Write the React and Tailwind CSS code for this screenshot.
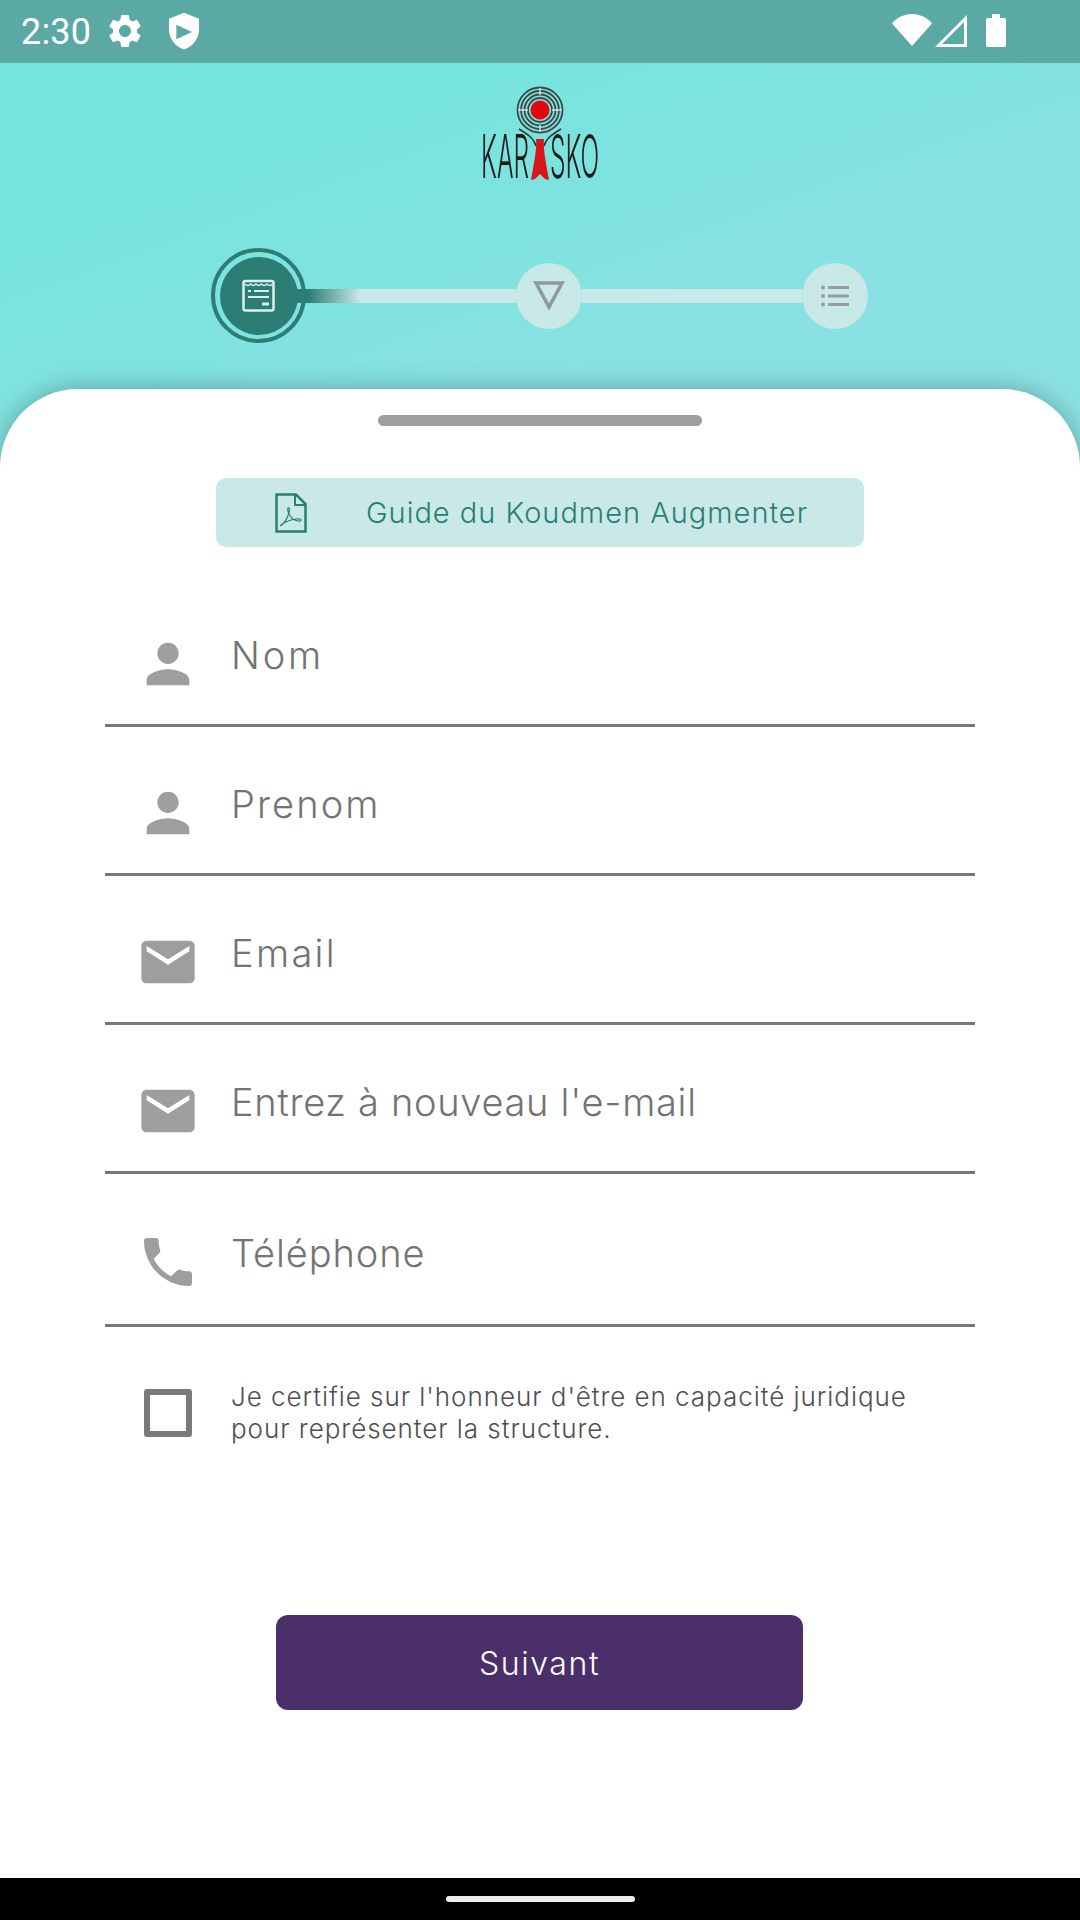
const PERSON = "M12 12c2.21 0 4-1.79 4-4s-1.79-4-4-4-4 1.79-4 4 1.79 4 4 4zm0 2c-2.67 0-8 1.34-8 4v2h16v-2c0-2.66-5.33-4-8-4z";
const EMAIL = "M20 4H4c-1.1 0-1.99.9-1.99 2L2 18c0 1.1.9 2 2 2h16c1.1 0 2-.9 2-2V6c0-1.1-.9-2-2-2zm0 4l-8 5-8-5V6l8 5 8-5v2z";
const PHONE = "M6.62 10.79c1.44 2.83 3.76 5.14 6.59 6.59l2.2-2.2c.27-.27.67-.36 1.02-.24 1.12.37 2.33.57 3.57.57.55 0 1 .45 1 1V20c0 .55-.45 1-1 1-9.39 0-17-7.61-17-17 0-.55.45-1 1-1h3.5c.55 0 1 .45 1 1 0 1.25.2 2.45.57 3.57.11.35.03.74-.25 1.02l-2.2 2.2z";
const GEAR = "M19.14 12.94c.04-.3.06-.61.06-.94 0-.32-.02-.64-.07-.94l2.03-1.58c.18-.14.23-.41.12-.61l-1.92-3.32c-.12-.22-.37-.29-.59-.22l-2.39.96c-.5-.38-1.03-.7-1.62-.94l-.36-2.54c-.04-.24-.24-.41-.48-.41h-3.84c-.24 0-.43.17-.47.41l-.36 2.54c-.59.24-1.13.57-1.62.94l-2.39-.96c-.22-.08-.47 0-.59.22L2.74 8.87c-.12.21-.08.47.12.61l2.03 1.58c-.05.3-.09.63-.09.94s.02.64.07.94l-2.03 1.58c-.18.14-.23.41-.12.61l1.92 3.32c.12.22.37.29.59.22l2.39-.96c.5.38 1.03.7 1.62.94l.36 2.54c.05.24.24.41.48.41h3.84c.24 0 .44-.17.47-.41l.36-2.54c.59-.24 1.13-.56 1.62-.94l2.39.96c.22.08.47 0 .59-.22l1.92-3.32c.12-.22.07-.47-.12-.61l-2.01-1.58zM12 15.6c-1.98 0-3.6-1.62-3.6-3.6s1.62-3.6 3.6-3.6 3.6 1.62 3.6 3.6-1.62 3.6-3.6 3.6z";

function Mi({ d, className }) {
  return (
    <svg viewBox="0 0 24 24" className={className} fill="currentColor">
      <path d={d} />
    </svg>
  );
}

function StatusBar() {
  return (
    <div className="h-[63px] bg-[#5aa9a4] flex items-center text-white">
      <span className="ml-[21px] text-[36px] leading-none tracking-[0.2px] font-['Roboto',sans-serif]">2:30</span>
      <Mi d={GEAR} className="ml-[14px] w-[40px] h-[40px] -mt-[1px]" />
      <svg viewBox="0 0 24 24" className="ml-[19px] w-[40px] h-[40px] -mt-[1px]" fill="currentColor">
        <path fillRule="evenodd" d="M12 1 3 4.6V11c0 5.55 3.84 10.74 9 12 5.16-1.26 9-6.45 9-12V4.6zM7.4 8.2v8.8l9.4-4.4z" />
      </svg>
      <svg viewBox="0 0 40 32" className="ml-auto w-[40px] h-[32px] -mt-[3px]" fill="currentColor">
        <path d="M0 9.5C5 3.5 12 0 20 0s15 3.500 20 9.500L20 32z" />
      </svg>
      <svg viewBox="0 0 32 32" className="ml-[3px] w-[32px] h-[32px] -mt-[1px]" fill="none" stroke="currentColor" strokeWidth="3">
        <path d="M30.500 3.500V30.500H3.500z" />
      </svg>
      <svg viewBox="0 0 20 33" className="ml-[19px] mr-[74px] w-[20px] h-[33px] -mt-[3px]" fill="currentColor">
        <path d="M6 0h8v4h4a2 2 0 0 1 2 2v25a2 2 0 0 1-2 2H2a2 2 0 0 1-2-2V6a2 2 0 0 1 2-2h4z" />
      </svg>
    </div>
  );
}

function Logo() {
  return (
    <svg viewBox="0 0 120 112" className="w-[120px] h-[112px] blur-[0.5px]">
      <g fill="none" stroke="#444" strokeWidth="1.800">
        <circle cx="60" cy="25" r="22.500" />
        <circle cx="60" cy="25" r="19" />
        <circle cx="60" cy="25" r="15.500" />
        <circle cx="60" cy="25" r="12" />
        <path d="M38 25h10M72 25h10M60 3v7M60 40v7" stroke="#ddd" strokeWidth="1.500" />
      </g>
      <circle cx="60" cy="25" r="9.500" fill="#e30613" />
      <path d="M39 44c8 5 15 9 17 17M81 44c-8 5-15 9-17 17" fill="none" stroke="#333" strokeWidth="1.500" />
      <path d="M56 54h8c-1 10 2 24 5 41l-4-1-5-5-5 5-4 1c3-17 6-31 5-41z" fill="#d8141c" />
      <text transform="translate(1 93) scale(0.41 1)" fontSize="60" fontWeight="300" fontFamily="Inter, sans-serif" fill="#1d1d1d">KAR</text>
      <text transform="translate(70 93) scale(0.41 1)" fontSize="60" fontWeight="300" fontFamily="Inter, sans-serif" fill="#1d1d1d">SKO</text>
    </svg>
  );
}

function Stepper() {
  return (
    <div className="mt-[51px] ml-[211px] w-[657px] flex items-center">
      <div className="w-[95px] h-[95px] shrink-0 rounded-full border-[4px] border-[#2c7e74] flex items-center justify-center">
        <div className="w-[78px] h-[78px] rounded-full bg-[#2c7e74] flex items-center justify-center">
          <svg viewBox="0 0 33 33" className="w-[33px] h-[33px] blur-[0.4px]" fill="none" stroke="#d8efec">
            <rect x="1.500" y="2" width="30" height="29.500" rx="2" strokeWidth="2.500" />
            <path d="M3 5q3 3 5.500 0q3 3 5.500 0q3 3 5.500 0q3 3 5.500 0q3 3 5.500 0" strokeWidth="1.500" />
            <path d="M6 12h3M12 12h15M6 18h21" strokeWidth="2" />
            <path d="M20 25h7" strokeWidth="3" />
          </svg>
        </div>
      </div>
      <div className="relative -ml-[10px] flex-1 h-[14px] bg-[linear-gradient(90deg,#2c7e74_0px,#2c7e74_12px,#c8e9e8_64px)]" />
      <div className="w-[66px] h-[66px] shrink-0 rounded-full bg-[#c8e9e8] flex items-center justify-center">
        <svg viewBox="0 0 32 30" className="w-[32px] h-[30px] blur-[0.4px]" fill="none" stroke="#8f9999" strokeWidth="3.500">
          <path d="M3 2h26L16 26z" />
        </svg>
      </div>
      <div className="flex-1 h-[14px] bg-[#c8e9e8]" />
      <div className="w-[66px] h-[66px] shrink-0 rounded-full bg-[#c8e9e8] flex items-center justify-center">
        <svg viewBox="0 0 28 22" className="w-[28px] h-[22px] blur-[0.4px]" fill="#979b9b">
          <circle cx="2" cy="2.500" r="2" />
          <circle cx="2" cy="11" r="2" />
          <circle cx="2" cy="19.500" r="2" />
          <rect x="7" y="1" width="21" height="3" />
          <rect x="7" y="9.500" width="21" height="3" />
          <rect x="7" y="18" width="21" height="3" />
        </svg>
      </div>
    </div>
  );
}

function Field({ icon, label, tracking, last }) {
  return (
    <div className={`flex items-center pl-[31px] border-b-[3px] border-[#787878] ${last ? "h-[153px] pt-[26px]" : "h-[149px] pt-[26px]"}`}>
      <Mi d={icon} className="w-[64px] h-[64px] shrink-0 text-[#9e9e9e]" />
      <span className={`ml-[31px] pb-[19px] text-[38px] leading-[44px] font-light text-[#737373] ${tracking}`}>{label}</span>
    </div>
  );
}

export default function App() {
  return (
    <div className="w-[1080px] h-[1920px] flex flex-col font-['Inter',sans-serif] bg-[linear-gradient(160deg,#75e4dc_10%,#8ae1e3_26%)] overflow-hidden">
      <StatusBar />
      <div className="h-[326px] shrink-0 flex flex-col">
        <div className="mt-[22px] flex justify-center"><Logo /></div>
        <Stepper />
      </div>
      <div className="flex-1 bg-white rounded-t-[78px] shadow-[0_0_26px_rgba(0,0,0,0.28)] flex flex-col">
        <div className="mt-[26px] mx-auto w-[324px] h-[11px] rounded-full bg-[#9e9e9e]" />
        <div className="mt-[52px] mx-auto w-[648px] h-[69px] rounded-[10px] bg-[#c8e9e7] flex items-center pl-[59px] text-[#2c7e74]">
          <svg viewBox="0 0 32 40" className="w-[32px] h-[40px] blur-[0.3px]" fill="none" stroke="currentColor">
            <path d="M1.500 1.500H21L30.500 11V38.500H1.500z" strokeWidth="2.500" />
            <path d="M20 2v10h10" strokeWidth="2" />
            <path d="M5 33c4-2 7-7 9-13 1-4 0-6-1-5-1 2 1 8 5 11 3 2 8 3 8 1 0-2-8-1-13 1-3 1-7 4-8 5z" strokeWidth="1.200" />
          </svg>
          <span className="ml-[59px] text-[29px] leading-none tracking-[1px] font-light">Guide du Koudmen Augmenter</span>
        </div>
        <div className="mt-[31px] mx-[105px] flex flex-col">
          <Field icon={PERSON} label="Nom" tracking="tracking-[2.8px]" />
          <Field icon={PERSON} label="Prenom" tracking="tracking-[2.1px]" />
          <Field icon={EMAIL} label="Email" tracking="tracking-[2.3px]" />
          <Field icon={EMAIL} label="Entrez à nouveau l'e-mail" tracking="tracking-[0.7px]" />
          <Field icon={PHONE} label="Téléphone" tracking="tracking-[0.9px]" last />
        </div>
        <div className="mt-[53px] ml-[144px] flex items-center">
          <div className="w-[48px] h-[48px] shrink-0 rounded-[3px] border-[6px] border-[#7a7a7a]" />
          <p className="ml-[39px] mt-[1px] text-[26px] leading-[32px] font-light text-[#4f4f4f] tracking-[0.95px]">
            Je certifie sur l'honneur d'être en capacité juridique<br />pour représenter la structure.
          </p>
        </div>
        <div className="mt-[170px] ml-[276px] w-[527px] h-[95px] pt-[2px] rounded-[12px] bg-[#4a2f6b] flex items-center justify-center text-white text-[32px] font-light tracking-[1.6px]">
          Suivant
        </div>
      </div>
      <div className="h-[42px] shrink-0 bg-black flex items-center justify-center z-10">
        <div className="w-[189px] h-[6px] rounded-full bg-[#eeeeee]" />
      </div>
    </div>
  );
}
